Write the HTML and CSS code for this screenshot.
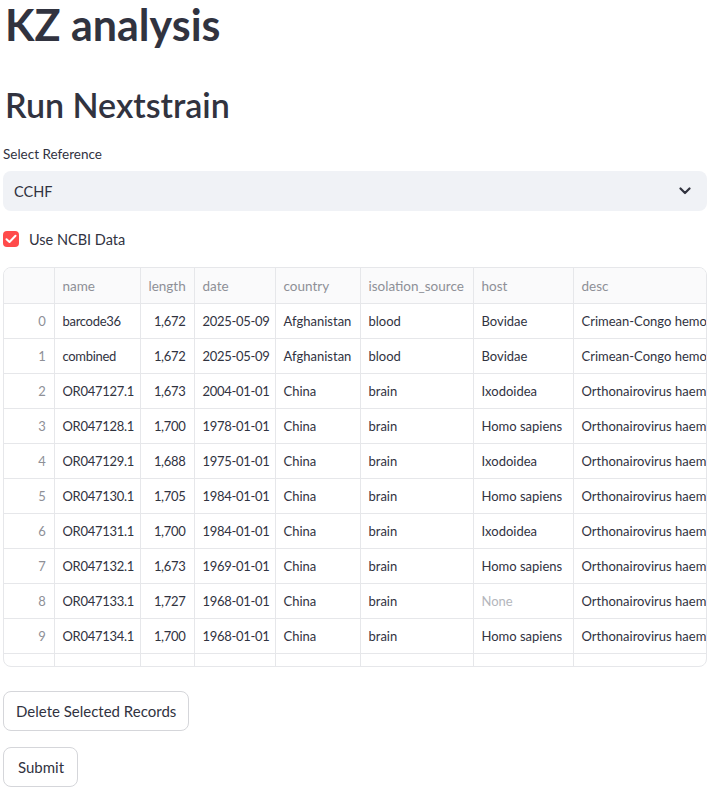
FILE: index.html
```html
<!DOCTYPE html>
<html>
<head>
<meta charset="utf-8">
<link rel="stylesheet" href="styles.css">
</head>
<body>
<main class="page">
  <h1 class="title">KZ analysis</h1>
  <h2 class="subtitle">Run Nextstrain</h2>

  <div class="field">
    <label class="field-label">Select Reference</label>
    <div class="select">
      <span class="select-value">CCHF</span>
      <svg class="chevron" width="12" height="8" viewBox="0 0 12 8"><path d="M1.5 1.5 L6 6 L10.5 1.5" fill="none" stroke="#31333f" stroke-width="2.2" stroke-linecap="round" stroke-linejoin="round"/></svg>
    </div>
  </div>

  <label class="check">
    <span class="check-box"><svg width="12" height="10" viewBox="0 0 12 10"><path d="M1.5 5.2 L4.5 8 L10.5 1.8" fill="none" stroke="#fff" stroke-width="2" stroke-linecap="round" stroke-linejoin="round"/></svg></span>
    <span class="check-label">Use NCBI Data</span>
  </label>

  <div class="grid-wrap">
    <table class="grid">
      <colgroup>
        <col class="c-idx"><col class="c-name"><col class="c-len"><col class="c-date"><col class="c-country"><col class="c-iso"><col class="c-host"><col class="c-desc">
      </colgroup>
      <thead>
        <tr><th></th><th>name</th><th>length</th><th>date</th><th>country</th><th>isolation_source</th><th>host</th><th>desc</th></tr>
      </thead>
      <tbody>
        <tr><td class="idx">0</td><td class="tight">barcode36</td><td class="num">1,672</td><td class="tight">2025-05-09</td><td>Afghanistan</td><td>blood</td><td>Bovidae</td><td>Crimean-Congo hemorrhagic fever virus isolate barcode36 segment S</td></tr>
        <tr><td class="idx">1</td><td class="tight">combined</td><td class="num">1,672</td><td class="tight">2025-05-09</td><td>Afghanistan</td><td>blood</td><td>Bovidae</td><td>Crimean-Congo hemorrhagic fever virus combined segment S</td></tr>
        <tr><td class="idx">2</td><td class="tight">OR047127.1</td><td class="num">1,673</td><td class="tight">2004-01-01</td><td>China</td><td>brain</td><td>Ixodoidea</td><td>Orthonairovirus haemorrhagiae isolate segment S, complete sequence</td></tr>
        <tr><td class="idx">3</td><td class="tight">OR047128.1</td><td class="num">1,700</td><td class="tight">1978-01-01</td><td>China</td><td>brain</td><td>Homo sapiens</td><td>Orthonairovirus haemorrhagiae isolate segment S, complete sequence</td></tr>
        <tr><td class="idx">4</td><td class="tight">OR047129.1</td><td class="num">1,688</td><td class="tight">1975-01-01</td><td>China</td><td>brain</td><td>Ixodoidea</td><td>Orthonairovirus haemorrhagiae isolate segment S, complete sequence</td></tr>
        <tr><td class="idx">5</td><td class="tight">OR047130.1</td><td class="num">1,705</td><td class="tight">1984-01-01</td><td>China</td><td>brain</td><td>Homo sapiens</td><td>Orthonairovirus haemorrhagiae isolate segment S, complete sequence</td></tr>
        <tr><td class="idx">6</td><td class="tight">OR047131.1</td><td class="num">1,700</td><td class="tight">1984-01-01</td><td>China</td><td>brain</td><td>Ixodoidea</td><td>Orthonairovirus haemorrhagiae isolate segment S, complete sequence</td></tr>
        <tr><td class="idx">7</td><td class="tight">OR047132.1</td><td class="num">1,673</td><td class="tight">1969-01-01</td><td>China</td><td>brain</td><td>Homo sapiens</td><td>Orthonairovirus haemorrhagiae isolate segment S, complete sequence</td></tr>
        <tr><td class="idx">8</td><td class="tight">OR047133.1</td><td class="num">1,727</td><td class="tight">1968-01-01</td><td>China</td><td>brain</td><td class="none">None</td><td>Orthonairovirus haemorrhagiae isolate segment S, complete sequence</td></tr>
        <tr><td class="idx">9</td><td class="tight">OR047134.1</td><td class="num">1,700</td><td class="tight">1968-01-01</td><td>China</td><td>brain</td><td>Homo sapiens</td><td>Orthonairovirus haemorrhagiae isolate segment S, complete sequence</td></tr>
        <tr class="partial"><td class="idx">10</td><td class="tight">OR047135.1</td><td class="num">1,670</td><td class="tight">2019-01-01</td><td>Afghanistan</td><td>blood</td><td>Hyalomma</td><td>Orthonairovirus haemorrhagiae isolate segment S, complete sequence</td></tr>
      </tbody>
    </table>
  </div>

  <div class="actions">
    <button class="btn">Delete Selected Records</button>
    <button class="btn btn-submit">Submit</button>
  </div>
</main>
</body>
</html>
```

FILE: styles.css
```css
html, body {
  margin: 0;
  padding: 0;
  background: #ffffff;
}

body {
  font-family: Lato, "Liberation Sans", sans-serif;
  color: #31333f;
  overflow: hidden;
}

.page {
  padding: 0 5px 0 3px;
}

.title {
  margin: 0;
  padding: 0 0 0 2px;
  font-size: 43px;
  line-height: 50px;
  font-weight: 700;
}

.subtitle {
  margin: 35px 0 0 0;
  padding-left: 2px;
  font-size: 34px;
  line-height: 40px;
  font-weight: 600;
}

.field {
  margin-top: 19px;
  display: flex;
  flex-direction: column;
}

.field-label {
  font-size: 13.5px;
  line-height: 20px;
  height: 20px;
}

.select {
  margin-top: 7px;
  height: 40px;
  background: #f0f2f6;
  border-radius: 8px;
  display: flex;
  align-items: center;
  justify-content: space-between;
  padding: 0 16px 0 11px;
}

.select-value {
  font-size: 14.5px;
}

.check {
  margin-top: 16px;
  height: 24px;
  display: flex;
  align-items: center;
  gap: 10px;
}

.check-box {
  width: 16px;
  height: 16px;
  background: #ff4b4b;
  border-radius: 4px;
  display: flex;
  align-items: center;
  justify-content: center;
}

.check-label {
  font-size: 14.5px;
}

.grid-wrap {
  margin-top: 16px;
  height: 398px;
  border: 1px solid #e6e7ea;
  border-radius: 8px;
  overflow: hidden;
}

.grid {
  border-collapse: collapse;
  table-layout: fixed;
  width: 1000px;
  font-size: 13px;
}

.c-idx { width: 50px; }
.c-name { width: 86px; }
.c-len { width: 54px; }
.c-date { width: 81px; }
.c-country { width: 85px; }
.c-iso { width: 113px; }
.c-host { width: 100px; }
.c-desc { width: 431px; }

.grid th,
.grid td {
  border-right: 1px solid #e6e7ea;
  border-bottom: 1px solid #e6e7ea;
  padding: 0 8px;
  white-space: nowrap;
  overflow: hidden;
  text-align: left;
}

.grid th {
  height: 35px;
  font-size: 13.5px;
  font-weight: 400;
  color: #8e9097;
  background: #fafafb;
}

.grid td {
  height: 34px;
}

.grid tr.partial td {
  vertical-align: top;
  padding-top: 9px;
}

.grid td.tight,
.grid td.num,
.grid td.idx {
  letter-spacing: -0.3px;
}

.grid td.idx {
  text-align: right;
  color: #8e9097;
}

.grid td.num {
  text-align: right;
}

.grid td.none {
  color: #b4b6bc;
}

.actions {
  margin-top: 24px;
  display: flex;
  flex-direction: column;
  align-items: flex-start;
  gap: 16px;
}

.btn {
  height: 40px;
  padding: 0 12px;
  font-family: Lato, "Liberation Sans", sans-serif;
  font-size: 15px;
  color: #31333f;
  background: #ffffff;
  border: 1px solid #d5d6da;
  border-radius: 8px;
}

.btn-submit {
  padding: 0 13px 0 14px;
}
```
